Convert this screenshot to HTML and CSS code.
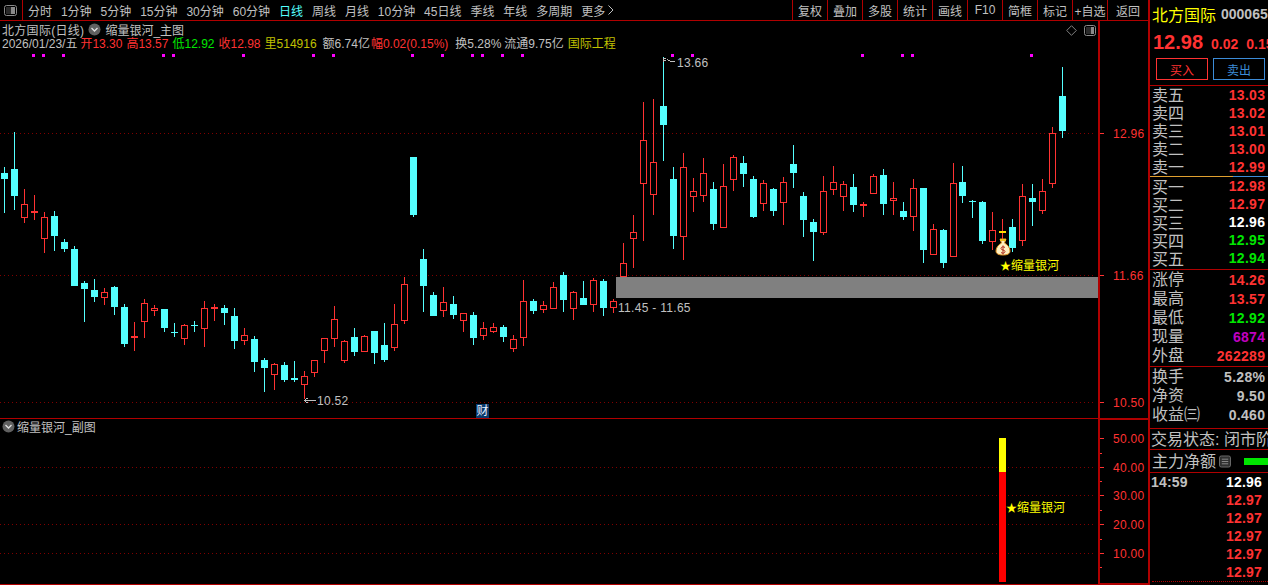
FILE: index.html
```html
<!DOCTYPE html>
<html lang="zh">
<head>
<meta charset="utf-8">
<title>北方国际</title>
<link rel="stylesheet" href="styles.css">
</head>
<body>
<div class="app">
  <main class="main">
    <nav class="toolbar">
      <div class="tool-toggle">
        <svg class="ico" width="13" height="11" viewBox="0 0 13 11"><rect x="0.5" y="0.5" width="12" height="10" rx="2" fill="none" stroke="#8a8a8a"/><rect x="7" y="2" width="4" height="7" fill="#8a8a8a"/><rect x="2" y="2" width="5" height="7" fill="#2a2a2a"/></svg>
      </div>
      <div class="periods">
        <span>分时</span><span>1分钟</span><span>5分钟</span><span>15分钟</span><span>30分钟</span><span>60分钟</span><span class="active">日线</span><span>周线</span><span>月线</span><span>10分钟</span><span>45日线</span><span>季线</span><span>年线</span><span>多周期</span><span class="more">更多<svg width="6" height="10" viewBox="0 0 6 10"><path d="M0.500 0.500L5 5L0.500 9.500" fill="none" stroke="#c0c0c0"/></svg></span>
      </div>
      <div class="actions">
        <span>复权</span><span>叠加</span><span>多股</span><span>统计</span><span>画线</span><span>F10</span><span>简框</span><span>标记</span><span>+自选</span><span class="back">返回</span>
      </div>
    </nav>

    <section class="pane pane-main">
      <div class="plot">
        <svg id="mainPlot" class="canvas" width="1098" height="397" viewBox="0 21 1098 397">
          <g id="gridMain"></g>
          <g id="candles"></g>
          <rect x="616" y="277" width="482" height="21" fill="#808080"/>
          <g id="dots"></g>
          <path d="M663.500 62V58.500H666M664 60.500H666M667 59.500L670 61L675 61" fill="none" stroke="#c0c0c0"/>
          <text class="lbl" x="677" y="67">13.66</text>
          <text class="lbl" x="618" y="312">11.45 - 11.65</text>
          <path d="M304.500 400.500H316M304.500 400.500L307.500 398M304.500 400.500L307.500 403" fill="none" stroke="#c0c0c0"/>
          <text class="lbl" x="317" y="405">10.52</text>
          <rect x="999" y="231" width="7" height="2" fill="#ffdc00"/>
          <g class="bag">
            <path d="M1000 239H1006L1004.500 243C1008 245 1010 248 1010 251C1010 254 1007 255 1003 255C999 255 996 254 996 251C996 248 998 245 1001.500 243Z" fill="#fff0c0" stroke="#e09020"/>
            <rect x="1000" y="239" width="6" height="2" fill="#f0c020"/>
            <path d="M1005 247.500C1004 246.500 1001 246.500 1001 248.500C1001 250.500 1005 249.500 1005 251.500C1005 253.500 1002 253.500 1001 252.500M1003 245.500V254.500" fill="none" stroke="#b03020"/>
          </g>
          <text class="sig" x="1000" y="270"><tspan class="star">★</tspan>缩量银河</text>
        </svg>
        <header class="info">
          <div class="info-title">
            <span class="stock">北方国际(日线)</span>
            <svg class="chev" width="13" height="13" viewBox="0 0 13 13"><circle cx="6.500" cy="6.500" r="6" fill="#606060"/><path d="M3.500 5L6.500 8L9.500 5" fill="none" stroke="#e0e0e0" stroke-width="1.300"/></svg>
            <span>缩量银河_主图</span>
          </div>
          <div class="info-quote">
            <span class="date">2026/01/23/五</span>
            <span class="r">开13.30</span>
            <span class="r">高13.57</span>
            <span class="g">低12.92</span>
            <span class="r">收12.98</span>
            <span class="y q-vol">里514916</span>
            <span class="q-amt">额6.74亿</span>
            <span class="r q-rng">幅0.02(0.15%)</span>
            <span class="q-turn">换5.28%</span>
            <span>流通9.75亿</span>
            <span class="y">国际工程</span>
          </div>
        </header>
        <div class="corner-tools">
          <svg width="11" height="11" viewBox="0 0 11 11"><path d="M5.500 0.700L10.300 5.500L5.500 10.300L0.700 5.500Z" fill="none" stroke="#808080"/></svg>
          <svg width="12" height="11" viewBox="0 0 12 11"><rect x="0.500" y="0.500" width="11" height="10" rx="2" fill="none" stroke="#8a8a8a"/><rect x="7" y="2" width="3" height="7" fill="#8a8a8a"/><rect x="2" y="2" width="5" height="7" fill="#2a2a2a"/></svg>
        </div>
      </div>
      <svg class="axis" viewBox="1100 21 48 397">
        <path d="M1100 133.500H1104M1100 275.500H1104M1100 402.500H1104" stroke="#ff3232"/>
        <text class="ax" x="1113" y="138">12.96</text>
        <text class="ax" x="1113" y="280">11.66</text>
        <text class="ax" x="1113" y="407">10.50</text>
      </svg>
    </section>
    <div class="cai">财</div>

    <section class="pane pane-sub">
      <div class="plot">
        <svg id="subPlot" class="canvas" width="1098" height="165" viewBox="0 419 1098 165">
          <g id="gridSub"></g>
          <rect x="999" y="438" width="7" height="34" fill="#ffff00"/>
          <rect x="999" y="472" width="7" height="110" fill="#ff0000"/>
          <text class="sig" x="1006" y="512"><tspan class="star">★</tspan>缩量银河</text>
        </svg>
        <div class="sub-title">
          <svg class="chev" width="13" height="13" viewBox="0 0 13 13"><circle cx="6.500" cy="6.500" r="6" fill="#606060"/><path d="M3.500 5L6.500 8L9.500 5" fill="none" stroke="#e0e0e0" stroke-width="1.300"/></svg>
          <span>缩量银河_副图</span>
        </div>
      </div>
      <svg class="axis axis-sub" viewBox="1100 420 48 163">
        <path d="M1100 438.500H1104M1100 467.500H1104M1100 495.500H1104M1100 524.500H1104M1100 553.500H1104M1100 453.500H1102M1100 481.500H1102M1100 510.500H1102M1100 539.500H1102M1100 567.500H1102" stroke="#ff3232"/>
        <text class="ax" x="1113" y="443">50.00</text>
        <text class="ax" x="1113" y="472">40.00</text>
        <text class="ax" x="1113" y="500">30.00</text>
        <text class="ax" x="1113" y="529">20.00</text>
        <text class="ax" x="1113" y="558">10.00</text>
      </svg>
    </section>
  </main>

  <aside class="side">
    <div class="side-head">
      <div class="name-row"><span class="name">北方国际</span><span class="code">000065</span></div>
      <div class="price-row"><span class="price">12.98</span><span class="chg">0.02</span><span class="chg">0.15%</span></div>
      <div class="trade-row"><button class="btn buy">买入</button><button class="btn sell">卖出</button></div>
    </div>
    <div class="book book-ask">
      <div class="row"><span>卖五</span><b class="r">13.03</b></div>
      <div class="row"><span>卖四</span><b class="r">13.02</b></div>
      <div class="row"><span>卖三</span><b class="r">13.01</b></div>
      <div class="row"><span>卖二</span><b class="r">13.00</b></div>
      <div class="row"><span>卖一</span><b class="r">12.99</b></div>
    </div>
    <div class="book-split"><i></i><i></i></div>
    <div class="book book-bid">
      <div class="row"><span>买一</span><b class="r">12.98</b></div>
      <div class="row"><span>买二</span><b class="r">12.97</b></div>
      <div class="row"><span>买三</span><b class="w">12.96</b></div>
      <div class="row"><span>买四</span><b class="g">12.95</b></div>
      <div class="row"><span>买五</span><b class="g">12.94</b></div>
    </div>
    <div class="stats stats-day">
      <div class="row"><span>涨停</span><b class="r">14.26</b></div>
      <div class="row"><span>最高</span><b class="r">13.57</b></div>
      <div class="row"><span>最低</span><b class="g">12.92</b></div>
      <div class="row"><span>现量</span><b class="m">6874</b></div>
      <div class="row"><span>外盘</span><b class="r">262289</b></div>
    </div>
    <div class="stats stats-fin">
      <div class="row"><span>换手</span><b>5.28%</b></div>
      <div class="row"><span>净资</span><b>9.50</b></div>
      <div class="row"><span>收益㈢</span><b>0.460</b></div>
    </div>
    <div class="status">交易状态: 闭市阶段</div>
    <div class="flow">
      <span class="flow-name">主力净额</span>
      <svg width="13" height="13" viewBox="0 0 13 13"><rect x="0.500" y="0.500" width="12" height="12" rx="2" fill="#303030" stroke="#707070"/><path d="M3 4H10M3 6.500H10M3 9H10" stroke="#909090"/></svg>
      <i class="flow-bar"></i>
    </div>
    <div class="ticks">
      <div class="tick"><span class="time">14:59</span><b class="w">12.96</b></div>
      <div class="tick"><b class="r">12.97</b></div>
      <div class="tick"><b class="r">12.97</b></div>
      <div class="tick"><b class="r">12.97</b></div>
      <div class="tick"><b class="r">12.97</b></div>
      <div class="tick"><b class="r">12.97</b></div>
    </div>
  </aside>
</div>
<script src="chart.js"></script>
</body>
</html>
```

FILE: styles.css
```css
* { box-sizing: border-box; }
html, body { margin: 0; height: 585px; background: #000; overflow: hidden; }
body { font-family: "Liberation Sans", "Noto Sans CJK SC", sans-serif; font-size: 12px; color: #c0c0c0; }
.app { display: flex; width: 1268px; height: 585px; }

.main { width: 1150px; flex: none; border-right: 2px solid #b00000; position: relative; }

.toolbar { display: flex; height: 21px; border-bottom: 1px solid #b00000; align-items: stretch; }
.tool-toggle { width: 24px; border-right: 1px solid #b00000; display: flex; align-items: center; justify-content: center; padding-right: 1px; }
.periods { display: flex; align-items: center; gap: 8.93px; padding-left: 5px; width: 769px; flex: none; white-space: nowrap; }
.periods .active { color: #54ffff; }
.more { display: flex; align-items: center; gap: 3px; }
.actions { display: flex; flex: 1; }
.actions span { width: 35px; border-left: 1px solid #b00000; display: flex; align-items: center; justify-content: center; white-space: nowrap; }
.actions .back { width: 41px; }

.pane { display: flex; border-bottom: 1px solid #b00000; }
.pane-main { height: 398px; }
.pane-sub { height: 166px; }
.plot { width: 1098px; flex: none; position: relative; }
.canvas { display: block; shape-rendering: crispEdges; }
.axis { display: block; flex: none; border-left: 2px solid #b00000; width: 50px; height: 100%; shape-rendering: crispEdges; }
.axis-sub { border-top: 1px solid #b00000; border-bottom: 1px solid #b00000; }

.lbl, .ax, .sig { font-family: "Liberation Sans", "Noto Sans CJK SC", sans-serif; font-size: 12px; shape-rendering: auto; }
.lbl { fill: #c0c0c0; letter-spacing: 0.3px; }
.ax { fill: #ff3232; letter-spacing: 0.3px; }
.sig { fill: #ffff00; }
.star { font-size: 11px; }
.bag { shape-rendering: auto; }

.info { position: absolute; left: 2px; top: 1px; }
.info-title { display: flex; align-items: center; height: 14px; gap: 4px; }
.stock { letter-spacing: 0.3px; }
.chev { flex: none; }
.info-quote { display: flex; gap: 4px; height: 15px; align-items: center; white-space: nowrap; margin-top: -1px; }
.date { margin-right: -1px; }
.q-vol { margin-right: 2px; }
.q-amt { margin-right: -3px; }
.q-rng { margin-right: 3px; }
.q-turn { margin-right: -1px; }
.corner-tools { position: absolute; left: 1066px; top: 4px; display: flex; gap: 7px; align-items: center; }
.sub-title { position: absolute; left: 2px; top: 0; display: flex; gap: 2px; align-items: center; height: 14px; }
.cai { position: absolute; left: 476px; top: 404px; width: 13px; height: 14px; background: #0a3a6c; color: #e8f0ff; font-size: 12px; line-height: 14px; text-align: center; }

.r { color: #ff3232; }
.g { color: #00e600; }
.y { color: #c0c000; }
.w { color: #ffffff; }
.m { color: #c000c0; }

.side { flex: 1; min-width: 0; overflow: hidden; }
.side-head { height: 86px; border-bottom: 1px solid #b00000; padding: 4px 0 0 2px; }
.name-row { display: flex; align-items: center; height: 20px; white-space: nowrap; gap: 5px; }
.name { color: #ffff00; font-size: 16px; }
.code { font-weight: 700; font-size: 14px; }
.price-row { display: flex; align-items: baseline; height: 26px; margin-top: 7px; white-space: nowrap; padding-left: 1px; gap: 8px; color: #ff3232; font-weight: 700; }
.price { font-size: 20px; }
.chg { font-size: 14px; }
.trade-row { display: flex; gap: 5px; padding-left: 4px; margin-top: 1px; }
.btn { width: 52px; height: 22px; background: #000; padding: 0; font: 12px "Liberation Sans", "Noto Sans CJK SC", sans-serif; }
.buy { border: 1px solid #ff3232; color: #ff3232; }
.sell { border: 1px solid #3c8cd8; color: #3c8cd8; }

.row { display: flex; justify-content: space-between; align-items: center; padding: 0 3px 0 2px; white-space: nowrap; }
.row span { font-size: 16px; }
.row b { font-size: 14px; letter-spacing: 0.3px; margin-right: -0.3px; }
.book .row { height: 18px; }
.book-ask .row span { margin-top: -2px; }
.book-split { display: flex; height: 1px; }
.book-split i:first-child { width: 83px; background: #e0a030; }
.book-split i:last-child { flex: 1; background: #3c8cd8; }
.book-bid { border-bottom: 1px solid #b00000; height: 93px; }
.stats { border-bottom: 1px solid #b00000; }
.stats .row { height: 19px; }
.stats .row span { margin-top: -3px; }
.stats-day { height: 97px; }
.stats-fin { height: 62px; }
.status { height: 21px; line-height: 21px; font-size: 16px; border-bottom: 1px solid #b00000; white-space: nowrap; overflow: hidden; padding-left: 1px; }
.flow { height: 23px; display: flex; align-items: center; gap: 3px; font-size: 16px; border-bottom: 1px solid #b00000; padding-left: 2px; white-space: nowrap; }
.flow-name { margin-top: -3px; }
.flow-bar { width: 24px; height: 7px; background: #00e600; margin-left: 10px; flex: none; }
.ticks { margin-left: 2px; padding: 0 6px 0 0; height: 109px; border-bottom: 1px dotted #b00000; }
.tick { display: flex; justify-content: flex-end; align-items: center; height: 18px; font-size: 14px; letter-spacing: 0.2px; }
.tick .time { margin-right: auto; font-weight: 700; font-size: 14px; margin-left: -1px; }
```

FILE: chart.js
```javascript
var NS = 'http://www.w3.org/2000/svg';
function rect(g, x, y, w, h, fill, stroke) {
  var r = document.createElementNS(NS, 'rect');
  r.setAttribute('x', x); r.setAttribute('y', y);
  r.setAttribute('width', w); r.setAttribute('height', h);
  r.setAttribute('fill', fill);
  if (stroke) r.setAttribute('stroke', stroke);
  g.appendChild(r);
}
function dotted(g, y) {
  var l = document.createElementNS(NS, 'line');
  l.setAttribute('x1', 0); l.setAttribute('x2', 1096);
  l.setAttribute('y1', y + 0.5); l.setAttribute('y2', y + 0.5);
  l.setAttribute('stroke', '#800000');
  l.setAttribute('stroke-dasharray', '1 3');
  g.appendChild(l);
}
[133, 275, 402].forEach(function (y) { dotted(document.getElementById('gridMain'), y); });
[467, 495, 524, 553].forEach(function (y) { dotted(document.getElementById('gridSub'), y); });

var dots = document.getElementById('dots');
[32, 42, 62, 162, 172, 242, 312, 332, 411, 441, 471, 481, 501, 521, 671, 691, 861, 901, 911, 1030].forEach(function (x) {
  rect(dots, x, 54, 3, 3, '#ff00ff');
});

/* x, up(1 red / 0 cyan), high, bodyTop, bodyBottom, low */
var K = [
[4,0,167,173,179,213],[14,0,132,169,196,210],[24,1,189,204,218,223],[34,1,195,211,213,220],[44,1,212,217,239,253],
[54,0,211,216,236,251],[64,0,239,242,249,252],[74,0,246,249,286,286],[84,0,281,283,289,322],[94,0,279,290,297,302],
[104,1,288,292,298,305],[114,0,286,287,307,315],[124,0,304,307,344,347],[134,1,322,336,338,351],[144,1,299,303,322,338],
[154,1,305,308,311,316],[164,0,309,309,328,332],[174,0,323,332,333,337],[184,1,324,325,339,345],[194,0,321,325,326,332],
[204,1,301,308,329,347],[214,1,304,307,309,321],[224,0,305,308,313,325],[234,0,308,316,341,349],[244,1,328,335,341,345],
[254,0,336,339,362,372],[264,0,358,360,368,392],[274,1,363,364,375,390],[284,0,362,365,380,382],[294,0,361,378,380,382],
[304,1,371,376,385,399],[314,1,360,360,373,377],[324,1,338,338,351,363],[334,1,306,319,339,347],[344,1,340,341,361,363],
[354,0,328,337,352,356],[364,1,335,336,352,352],[374,0,331,331,353,364],[384,0,323,345,360,362],[394,1,304,324,348,351],
[404,1,277,284,321,324],[413,0,157,157,215,217],[423,0,249,259,286,312],[433,0,292,295,316,316],[443,1,287,302,311,317],
[453,0,296,304,315,319],[463,1,313,313,321,332],[473,0,312,315,338,345],[483,1,322,328,336,340],[493,1,323,327,332,333],
[503,0,325,327,337,342],[513,1,335,339,349,352],[523,1,280,301,338,346],[533,0,299,301,311,314],[543,1,301,305,310,313],
[553,1,282,287,309,309],[563,0,272,275,300,312],[573,1,291,292,309,320],[583,0,281,298,305,305],[593,1,278,280,305,312],
[603,0,279,281,308,316],[613,1,299,301,308,313],[623,1,243,263,277,277],[633,1,215,232,239,268],[643,1,102,140,184,241],
[653,1,99,162,195,215],[663,0,57,106,125,161],[673,0,167,179,236,249],[683,1,153,167,237,260],[693,1,178,191,197,212],
[703,1,158,173,196,202],[713,0,182,189,224,230],[723,1,164,186,228,228],[733,1,155,157,180,191],[743,0,156,163,174,187],
[753,0,176,179,217,218],[763,1,180,183,204,211],[773,0,188,189,211,216],[783,1,177,182,203,225],[793,0,145,164,173,188],
[803,0,192,196,220,237],[813,0,219,222,232,261],[823,1,176,191,233,235],[833,1,166,182,190,195],[843,1,181,184,197,211],
[853,0,174,187,205,212],[863,1,202,204,206,217],[873,1,174,176,194,194],[883,0,169,175,204,215],[893,1,182,198,201,215],
[903,0,202,211,217,220],[913,1,179,188,217,231],[923,0,188,188,250,263],[933,1,224,229,255,255],[943,0,229,230,263,268],
[953,1,163,183,257,257],[962,0,166,182,196,203],[972,0,200,201,202,218],[982,0,201,202,241,244],[992,1,212,230,242,250],
[1002,1,219,239,240,240],[1012,0,219,227,248,252],[1022,1,184,196,241,246],[1032,0,184,198,202,226],[1042,1,179,191,211,214],
[1052,1,127,133,184,188],[1062,0,67,96,131,138]
];
var g = document.getElementById('candles');
K.forEach(function (k) {
  var x = k[0], up = k[1], c = up ? '#ff3232' : '#54ffff';
  rect(g, x, k[2], 1, k[5] - k[2], c);
  if (up) rect(g, x - 3 + 0.5, k[3] + 0.5, 6, k[4] - k[3] - 1, '#000', c);
  else rect(g, x - 3, k[3], 7, k[4] - k[3], c);
});
```
